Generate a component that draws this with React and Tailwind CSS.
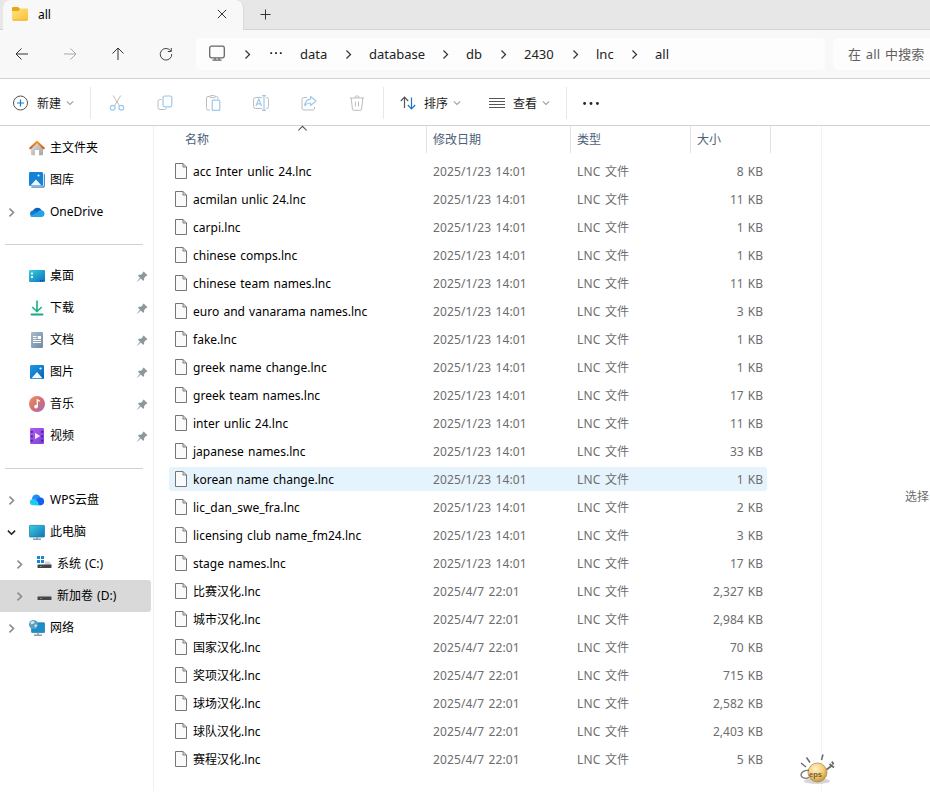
const files = [
  ['acc Inter unlic 24.lnc', '2025/1/23 14:01', '8 KB'],
  ['acmilan unlic 24.lnc', '2025/1/23 14:01', '11 KB'],
  ['carpi.lnc', '2025/1/23 14:01', '1 KB'],
  ['chinese comps.lnc', '2025/1/23 14:01', '1 KB'],
  ['chinese team names.lnc', '2025/1/23 14:01', '11 KB'],
  ['euro and vanarama names.lnc', '2025/1/23 14:01', '3 KB'],
  ['fake.lnc', '2025/1/23 14:01', '1 KB'],
  ['greek name change.lnc', '2025/1/23 14:01', '1 KB'],
  ['greek team names.lnc', '2025/1/23 14:01', '17 KB'],
  ['inter unlic 24.lnc', '2025/1/23 14:01', '11 KB'],
  ['japanese names.lnc', '2025/1/23 14:01', '33 KB'],
  ['korean name change.lnc', '2025/1/23 14:01', '1 KB'],
  ['lic_dan_swe_fra.lnc', '2025/1/23 14:01', '2 KB'],
  ['licensing club name_fm24.lnc', '2025/1/23 14:01', '3 KB'],
  ['stage names.lnc', '2025/1/23 14:01', '17 KB'],
  ['比赛汉化.lnc', '2025/4/7 22:01', '2,327 KB'],
  ['城市汉化.lnc', '2025/4/7 22:01', '2,984 KB'],
  ['国家汉化.lnc', '2025/4/7 22:01', '70 KB'],
  ['奖项汉化.lnc', '2025/4/7 22:01', '715 KB'],
  ['球场汉化.lnc', '2025/4/7 22:01', '2,582 KB'],
  ['球队汉化.lnc', '2025/4/7 22:01', '2,403 KB'],
  ['赛程汉化.lnc', '2025/4/7 22:01', '5 KB'],
];

const crumbs = [
  ['data', 'w-[69px]'],
  ['database', 'w-[97px]'],
  ['db', 'w-[58px]'],
  ['2430', 'w-[72px]'],
  ['lnc', 'w-[59px]'],
];

function Icon({ size = 16, className = '', children, ...rest }) {
  return (
    <svg width={size} height={size} viewBox={`0 0 ${size} ${size}`} fill="none" className={`shrink-0 ${className}`} {...rest}>
      {children}
    </svg>
  );
}

function Chevron({ dir = 'right', size = 8, color = '#333', width = 1.1, className = '' }) {
  const d = {
    right: 'M2.2 .5 5.8 4 2.2 7.5',
    down: 'M.8 2.3 4 5.5 7.2 2.3',
    up: 'M.3 5.7 4 2 7.7 5.7',
  }[dir];
  return (
    <svg width={size} height={size} viewBox="0 0 8 8" fill="none" stroke={color} strokeWidth={width} className={`shrink-0 ${className}`}>
      <path d={d} />
    </svg>
  );
}

/* ---------- sidebar icons ---------- */

const HomeIcon = () => (
  <Icon>
    <defs>
      <linearGradient id="hw" x1="0" y1="0" x2="1" y2="1"><stop stopColor="#e3e3e3" /><stop offset="1" stopColor="#a3a3a3" /></linearGradient>
      <linearGradient id="hr" x1="0" y1="0" x2="0" y2="1"><stop stopColor="#f59b2b" /><stop offset="1" stopColor="#d5531c" /></linearGradient>
    </defs>
    <path d="M2 7.500 8 2l6 5.500V14a1.200 1.200 0 0 1-1.200 1.200H10V10H6v5.200H3.200A1.200 1.200 0 0 1 2 14z" fill="url(#hw)" />
    <path d="M1.200 8.300 8 1.700l6.800 6.600" stroke="url(#hr)" strokeWidth="1.900" strokeLinecap="round" strokeLinejoin="round" />
  </Icon>
);

const GalleryIcon = () => (
  <Icon>
    <path d="M14.800 1.800a1 1 0 0 1 1 1V14a1.800 1.800 0 0 1-1.800 1.800H3.500a1.200 1.200 0 0 1-1.200-1.200h11.500a1 1 0 0 0 1-1z" fill="#2c6fbc" />
    <path d="M2 14.500h11.500v1.300H3.200A1.200 1.200 0 0 1 2 14.600z" fill="#8cacdc" />
    <rect x="0" y="0" width="14" height="14" rx="1.200" fill="#1583d3" />
    <path d="m1.500 13.500 5.500-6 5.500 6z" fill="#eef7ff" />
    <circle cx="9.500" cy="3.600" r="1" fill="#fff" />
  </Icon>
);

const OneDriveIcon = () => (
  <Icon>
    <path d="M3.800 7A4.800 4.800 0 0 1 12.500 6L9 10 2 11z" fill="#0b62b9" />
    <path d="M3.500 6.600c2-.6 3.800.2 5.500 1.600L5 13H3.500a3.300 3.300 0 0 1 0-6.400z" fill="#1578d0" />
    <path d="M8.500 8.200c1.300-1.600 3-2.500 4.400-2A3.500 3.500 0 0 1 13 13H3.500c-1 0-1.800-.3-2.400-.9z" fill="#28a0ea" />
  </Icon>
);

const DesktopIcon = () => (
  <Icon>
    <defs><linearGradient id="dk" x1="0" y1="0" x2="1" y2="1"><stop stopColor="#38d0dc" /><stop offset="1" stopColor="#0c6fc0" /></linearGradient></defs>
    <rect x="0" y="2" width="16" height="12" rx="1" fill="url(#dk)" />
    <path d="M2 4.500h2v2H2zM2 8h2v2H2z" fill="#e8fbff" />
    <path d="M11 12.500h1M13 12.500h1" stroke="#063f78" />
  </Icon>
);

const DownloadIcon = () => (
  <Icon>
    <path d="M8 .5v10.700M3.300 7l4.700 4.500L12.700 7" stroke="#22b487" strokeWidth="1.700" />
    <path d="M2.500 14.500h11" stroke="#1fa58a" strokeWidth="1.900" strokeLinecap="round" />
  </Icon>
);

const DocIcon = () => (
  <Icon>
    <defs><linearGradient id="dc" x1="0" y1="0" x2="1" y2="1"><stop stopColor="#a9bccd" /><stop offset="1" stopColor="#6d89a4" /></linearGradient></defs>
    <rect x="2" y="0" width="12" height="16" rx="1.200" fill="url(#dc)" />
    <path d="M4 4.500h3.500M4 6.500h3.500M4 8.500h8M4 10.500h8" stroke="#fff" />
    <path d="M8.700 4H12v3H8.700z" fill="#fff" />
  </Icon>
);

const PictureIcon = () => (
  <Icon>
    <defs><linearGradient id="pc" x1="0" y1="0" x2="1" y2="1"><stop stopColor="#1d9be6" /><stop offset="1" stopColor="#0861b5" /></linearGradient></defs>
    <rect x="1" y="1" width="14" height="14" rx="1.200" fill="url(#pc)" />
    <path d="m2.500 14.300 5.500-6.300 5.500 6.300z" fill="#eff8ff" />
    <circle cx="11.500" cy="4.500" r="1.100" fill="#fff" />
  </Icon>
);

const MusicIcon = () => (
  <Icon>
    <defs><linearGradient id="ms" x1="0" y1="0" x2="1" y2="1"><stop stopColor="#ed965f" /><stop offset=".5" stopColor="#d46f70" /><stop offset="1" stopColor="#9d6fc0" /></linearGradient></defs>
    <circle cx="8" cy="8" r="8" fill="url(#ms)" />
    <path d="M8.300 10.500V3.800l2.700 1.500" stroke="#fff" strokeWidth="1.300" />
    <circle cx="7" cy="10.600" r="1.900" fill="#fff" />
  </Icon>
);

const VideoIcon = () => (
  <Icon>
    <defs><linearGradient id="vd" x1="0" y1="0" x2="1" y2="1"><stop stopColor="#b15df0" /><stop offset="1" stopColor="#7b3fdc" /></linearGradient></defs>
    <rect x="1" y="0" width="14" height="16" rx="1.200" fill="url(#vd)" />
    <path d="M2.900 3v11M13.100 3v11" stroke="#3d1a80" strokeWidth="1.600" strokeDasharray="1.800 2.600" />
    <path d="M6 4.800v6.400L11.200 8z" fill="#f3e6ff" />
  </Icon>
);

const WpsCloudIcon = () => (
  <Icon>
    <circle cx="7.300" cy="6.800" r="4.300" fill="#1f8ff6" />
    <circle cx="11.300" cy="9.400" r="3.800" fill="#1560ee" />
    <path d="M7 8h5v5.200H7z" fill="#1560ee" />
    <path d="M1 10.200A3.200 3.200 0 0 1 4 7c2.800 0 5.400 2.300 6 6.200H4a3 3 0 0 1-3-3z" fill="#1ecbee" />
  </Icon>
);

const PcIcon = () => (
  <Icon>
    <defs><linearGradient id="pcg" x1="0" y1="0" x2="1" y2="1"><stop stopColor="#3cd0e0" /><stop offset="1" stopColor="#0f72b8" /></linearGradient></defs>
    <rect x=".4" y="1.400" width="15.200" height="11.600" rx=".8" fill="url(#pcg)" stroke="#1d7fae" strokeWidth=".8" />
    <path d="M8 13v2M4 15.300h8" stroke="#8c9ba6" strokeWidth="1.400" />
  </Icon>
);

const Drive = ({ system }) => (
  <Icon>
    {system && <path d="M1 0h3v3H1zM5 0h3v3H5zM1 4h3v3H1zM5 4h3v3H5z" fill="#1686d9" />}
    <path d={system ? 'M9 5.500h4.500L15.500 9H9z' : 'M3.500 5.500h10L15.500 9h-14z'} fill="#d5d5d5" />
    <rect x="1.500" y="8.500" width="14" height="3.500" rx=".4" fill="#454545" />
    <path d="M4 10.500h1.500" stroke="#35c759" />
  </Icon>
);

const NetworkIcon = () => (
  <Icon>
    <rect x="2.600" y="2.800" width="13" height="9.800" rx=".6" fill="#1c8fcb" stroke="#1574a5" strokeWidth=".7" />
    <path d="M9 12.500v2M5 15.200h8" stroke="#8c9ba6" strokeWidth="1.400" />
    <circle cx="4.500" cy="4.500" r="4.500" fill="#5d9dbe" />
    <path d="M1.500 2c1.500-1.300 3.500-1.500 4 0S3.500 4 2 4.500zM5.500 5C7 4.300 8 4.500 8.300 5.500L6 8z" fill="#cfe6ef" />
  </Icon>
);

const Pin = () => (
  <Icon size={11} className="ml-auto mr-[5px]">
    <path d="M6.600.6 10.400 4.200 9.200 5.200 8.900 5 7.200 7l-.1 2.200-1 .6-2.300-2.200L.6 10.600l-.5-.4L3 6.800 1 4.700l.6-.9 2.400-.1 1.900-1.800-.3-.4z" fill="#8c979e" />
  </Icon>
);

const side = [
  { label: '主文件夹', icon: HomeIcon },
  { label: '图库', icon: GalleryIcon },
  { label: 'OneDrive', icon: OneDriveIcon, arrow: 'right' },
  null,
  { label: '桌面', icon: DesktopIcon, pin: true },
  { label: '下载', icon: DownloadIcon, pin: true },
  { label: '文档', icon: DocIcon, pin: true },
  { label: '图片', icon: PictureIcon, pin: true },
  { label: '音乐', icon: MusicIcon, pin: true },
  { label: '视频', icon: VideoIcon, pin: true },
  null,
  { label: 'WPS云盘', icon: WpsCloudIcon, arrow: 'right' },
  { label: '此电脑', icon: PcIcon, arrow: 'down' },
  { label: '系统 (C:)', icon: () => <Drive system />, arrow: 'right', nested: true },
  { label: '新加卷 (D:)', icon: () => <Drive />, arrow: 'right', nested: true, active: true },
  { label: '网络', icon: NetworkIcon, arrow: 'right' },
];

function SideItem({ item }) {
  if (!item) {
    return (
      <div className="flex h-8 items-center pl-[5px] pr-2.5">
        <div className="mt-px h-px w-full bg-[#d0d0d0]" />
      </div>
    );
  }
  const Glyph = item.icon;
  return (
    <div className={`flex h-8 items-center text-xs [word-spacing:1px] ${item.nested ? 'pl-[15px]' : 'pl-[7px]'} ${item.active ? 'mr-0.5 rounded-r-[3px] bg-[#d9d9d9]' : ''}`}>
      <div className={`flex shrink-0 ${item.nested ? 'w-[21px]' : 'w-[22px]'}`}>
        {item.arrow && <Chevron dir={item.arrow} size={9} width={1.4} color={item.arrow === 'down' ? '#222' : '#8b8b8b'} />}
      </div>
      <Glyph />
      <span className="-mt-px ml-[5px] whitespace-nowrap">{item.label}</span>
      {item.pin && <Pin />}
    </div>
  );
}

/* ---------- bars ---------- */

function TabStrip() {
  return (
    <div className="flex h-[30px] bg-[#e7e7e7]">
      <div className="w-[3px] border-b border-[#d5d5d5]" />
      <div className="flex w-[241px] items-center rounded-t-lg border-r border-[#d9d9d9] bg-[#f8f8f8] pl-[9px]">
        <Icon className="mt-[-2px]">
          <defs><linearGradient id="fd" x1="0" y1="0" x2="1" y2="1"><stop stopColor="#ffe08a" /><stop offset="1" stopColor="#fbc32f" /></linearGradient></defs>
          <rect x="0" y="2.500" width="16" height="12" rx="1.200" fill="url(#fd)" />
          <path d="M0 2.200A1.200 1.200 0 0 1 1.200 1H6l2 1.800L6.500 5H0z" fill="#eba60c" />
          <path d="M1 14.100h14" stroke="#e5a51c" strokeWidth=".8" />
        </Icon>
        <span className="ml-2.5 text-xs">all</span>
        <Icon size={10} className="ml-auto mr-4 mt-[-3px]" stroke="#333"><path d="m.8.800 8.400 8.400M9.200.8.800 9.200" /></Icon>
      </div>
      <div className="flex grow items-center border-b border-[#d5d5d5] pl-[16px]">
        <Icon size={11} stroke="#333"><path d="M5.500.5v10M.5 5.500h10" /></Icon>
      </div>
    </div>
  );
}

const navIcons = [
  ['#333', 'M7.500 2.500 2 8l5.500 5.500M2 8h12'],
  ['#a8a8a8', 'M8.500 2.500 14 8l-5.500 5.500M14 8H2'],
  ['#333', 'M2.500 7.500 8 2l5.500 5.500M8 2v12'],
  ['#444', 'M12.800 5A5.800 5.800 0 1 0 13.800 8M13.300 2v3.500H9.800'],
];

function NavBar() {
  return (
    <div className="flex h-[49px] items-start border-b border-[#d3d3d3] bg-[#f8f8f8] pt-2 text-[13px] text-[#222]">
      <div className="-ml-0.5 mr-1.5 flex h-8">
        {navIcons.map(([color, d]) => (
          <div key={d} className="flex w-12 items-center justify-center">
            <Icon stroke={color} strokeWidth="1"><path d={d} /></Icon>
          </div>
        ))}
      </div>
      <div className="flex h-8 w-[629px] shrink-0 items-center rounded-[5px] bg-[#fdfdfd] pl-[13px]">
        <Icon stroke="#666" strokeWidth="1.300" className="mt-[-2px]">
          <rect x=".7" y="1.200" width="14.600" height="11.600" rx="1.800" />
          <path d="M6 13v2M10 13v2M3.500 15.200h9" />
        </Icon>
        <Chevron className="ml-[18px]" size={9} />
        <Icon size={12} className="ml-[18px] mt-[-2px]"><path d="M.3 5.200h1.800V7H.3zM5.100 5.200h1.800V7H5.100zM9.900 5.200h1.800V7H9.900z" fill="#222" /></Icon>
        <div className="ml-[18px] flex">
          {crumbs.map(([name, width]) => (
            <div key={name} className={`flex items-center ${width}`}>
              <span className="pt-0.5">{name}</span>
              <Chevron className="ml-auto mr-4" size={9} />
            </div>
          ))}
          <span className="pt-0.5">all</span>
        </div>
      </div>
      <div className="ml-2 flex h-8 grow items-center overflow-hidden whitespace-nowrap rounded-l-[5px] bg-[#fdfdfd] pl-[15px] pt-px text-[13px] tracking-[0.2px] text-[#5f5f5f] [word-spacing:1px]">
        在 all 中搜索
      </div>
    </div>
  );
}

const gray = '#bdbdbd';
const blue = '#9cc9ec';

const editIcons = [
  <g key="cut">
    <path d="M4.200.5 10.600 11M11.800.5 5.400 11" stroke={gray} />
    <circle cx="3.700" cy="12.800" r="2.400" stroke={blue} strokeWidth="1.200" />
    <circle cx="12.300" cy="12.800" r="2.400" stroke={blue} strokeWidth="1.200" />
  </g>,
  <g key="copy">
    <path d="M4.500 4.500H3a2 2 0 0 0-2 2v6a2 2 0 0 0 2 2h4.500a2 2 0 0 0 2-1.500" stroke={gray} />
    <rect x="6" y="1" width="8.800" height="10.800" rx="1.800" stroke={blue} strokeWidth="1.200" />
  </g>,
  <g key="paste">
    <path d="M5 15H3a1.500 1.500 0 0 1-1.500-1.500V3A1.500 1.500 0 0 1 3 1.500h2M10 1.500h1.500A1.500 1.500 0 0 1 13 3v1" stroke={gray} />
    <rect x="4.800" y=".6" width="5.400" height="2" rx="1" stroke={gray} />
    <rect x="7.200" y="5.200" width="7.600" height="10.200" rx="1" stroke={blue} strokeWidth="1.200" />
  </g>,
  <g key="rename">
    <path d="M9 2.500H2.500a2 2 0 0 0-2 2v7a2 2 0 0 0 2 2H9M13 2.500h.5a2 2 0 0 1 2 2v7a2 2 0 0 1-2 2H13" stroke={gray} />
    <path d="m3 11 2.800-7 2.800 7M4 8.800h3.600M11 .6v14.800M9 .6h4M9 15.400h4" stroke={blue} strokeWidth="1.200" />
  </g>,
  <g key="share">
    <path d="M6 2.500H3a2 2 0 0 0-2 2V13a2 2 0 0 0 2 2h8.500a2 2 0 0 0 2-2v-1" stroke={gray} />
    <path d="M9.500 1.500 15 6l-5.500 4.500V8C7 8 5.200 8.800 3.800 10.500 4.200 7 6 4.500 9.500 4.200z" stroke={blue} strokeWidth="1.200" strokeLinejoin="round" />
  </g>,
  <g key="delete" stroke={gray}>
    <path d="M.8 3h14.400M2.200 3l1.200 11a1.500 1.500 0 0 0 1.500 1.300h6.200a1.500 1.500 0 0 0 1.500-1.300L13.800 3M5.800 3a2.200 2.200 0 0 1 4.400 0M6.500 6.500v5M9.500 6.500v5" />
  </g>,
];

function Toolbar() {
  return (
    <div className="flex h-[47px] items-center border-b border-[#d3d3d3] bg-white pt-0.5 text-xs text-[#1a1a1a]">
      <div className="flex h-8 w-[91px] items-center border-r border-[#e8e8e8] pl-[13px]">
        <Icon stroke="#555" className="-mt-px">
          <circle cx="7.500" cy="8" r="7" />
          <path d="M7.500 4.500v7M4 8h7" stroke="#0f7ad1" strokeWidth="1.200" />
        </Icon>
        <span className="ml-2 pt-px">新建</span>
        <Chevron dir="down" className="ml-[5px]" color="#a0a0a0" />
      </div>
      <div className="flex h-8 border-r border-[#e8e8e8] px-0.5">
        {editIcons.map((shape) => (
          <div key={shape.key} className="flex w-12 items-center justify-center">
            <Icon>{shape}</Icon>
          </div>
        ))}
      </div>
      <div className="flex h-8 w-[183px] items-center border-r border-[#e8e8e8] pl-4">
        <Icon strokeWidth="1.200">
          <path d="M.8 6 4.500 2.200 8.200 6M4.500 2.200V13" stroke="#555" />
          <path d="M7.800 10 11.500 13.800 15.200 10M11.500 13.800V2.500" stroke="#1976c8" />
        </Icon>
        <span className="ml-2 pt-px">排序</span>
        <Chevron dir="down" className="ml-[5px]" color="#a0a0a0" />
        <Icon className="ml-7" stroke="#555"><path d="M0 3.500h16M0 6.500h16M0 9.500h16M0 12.500h16" /></Icon>
        <span className="ml-2 pt-px">查看</span>
        <Chevron dir="down" className="ml-[5px]" color="#a0a0a0" />
      </div>
      <Icon className="ml-4">
        <g fill="#222"><circle cx="1.600" cy="8.500" r="1.400" /><circle cx="8" cy="8.500" r="1.400" /><circle cx="14.400" cy="8.500" r="1.400" /></g>
      </Icon>
    </div>
  );
}

function FileList() {
  return (
    <div className="w-[667px] shrink-0">
      <div className="flex h-[27px] text-xs leading-[28px] text-[#4c607a]">
        <div className="relative w-[273px] border-r border-[#e3e3e3] pl-[31px]">
          名称
          <Chevron dir="up" size={9} width={1} color="#555" className="absolute left-[144px] top-[-2px]" />
        </div>
        <div className="w-36 border-r border-[#e3e3e3] pl-1.5">修改日期</div>
        <div className="w-[120px] border-r border-[#e3e3e3] pl-1.5">类型</div>
        <div className="w-20 border-r border-[#e3e3e3] pl-1.5">大小</div>
      </div>
      <div className="flex flex-col gap-1 pl-[15px] pr-[54px] pt-1.5 text-xs">
        {files.map(([name, date, size]) => (
          <div
            key={name}
            className={`flex h-6 items-center whitespace-nowrap rounded-[3px] pl-1 pr-1 pt-px [word-spacing:1px] ${name.startsWith('korean') ? 'bg-[#e5f3fd]' : ''}`}
          >
            <Icon className="-mt-px">
              <path d="M2.500.5h7.500l3.500 3.500v11.500h-11z" fill="#fafafa" stroke="#767676" />
              <path d="M10 .5v3.500h3.500" stroke="#767676" />
            </Icon>
            <span className="ml-1 w-60 pt-px tracking-[0.02px] text-black">{name}</span>
            <span className="w-36 pt-px tracking-[0.14px] text-[#6d6d6d]">{date}</span>
            <span className="pt-px tracking-[0.2px] text-[#6d6d6d]">LNC 文件</span>
            <span className="ml-auto pt-px text-[#6d6d6d]">{size}</span>
          </div>
        ))}
      </div>
    </div>
  );
}

const Mascot = () => (
  <svg width="40" height="36" viewBox="0 0 40 36" fill="none" className="absolute left-[797px] top-[751px]">
    <defs><radialGradient id="ball" cx=".4" cy=".3" r=".7"><stop stopColor="#fff2c8" /><stop offset=".6" stopColor="#f5cb72" /><stop offset="1" stopColor="#c9963f" /></radialGradient></defs>
    <ellipse cx="20" cy="30" rx="13" ry="3" fill="#bbb" opacity=".6" />
    <path d="m4 12 5 4M9.500 6.500l3.500 5M26 3.500 24.500 9" stroke="#6f6f6f" strokeWidth="1.600" />
    <path d="m29 19 6-4.500M32.500 13l4.500 3.500M35 10.500l1.500 3" stroke="#6a6a6a" strokeWidth="1.800" />
    <circle cx="20.500" cy="21.500" r="9.500" fill="url(#ball)" stroke="#a18758" strokeWidth=".7" />
    <path d="M12 19.500c-5-.5-8 2-8 4.500s4 4.500 8 2.500" stroke="#777" strokeWidth="1.300" />
    <text x="12" y="26" fontSize="7.500" fontWeight="bold" fill="#6b5c42" fontFamily="Liberation Sans, sans-serif">eps</text>
  </svg>
);

export default function App() {
  return (
    <div className="relative flex h-[794px] w-[930px] flex-col overflow-hidden bg-white font-['Noto_Sans','Noto_Sans_CJK_SC',sans-serif] text-black">
      <TabStrip />
      <NavBar />
      <Toolbar />
      <div className="flex h-[665px]">
        <div className="w-[154px] shrink-0 border-r border-[#f0f0f0] pt-1.5">
          {side.map((item, i) => <SideItem key={i} item={item} />)}
        </div>
        <FileList />
        <div className="flex grow items-center overflow-hidden whitespace-nowrap border-l border-[#f3f3f3] pl-[83px] pt-[76px] text-xs text-[#6d6d6d]">
          选择
        </div>
      </div>
      <Mascot />
    </div>
  );
}
